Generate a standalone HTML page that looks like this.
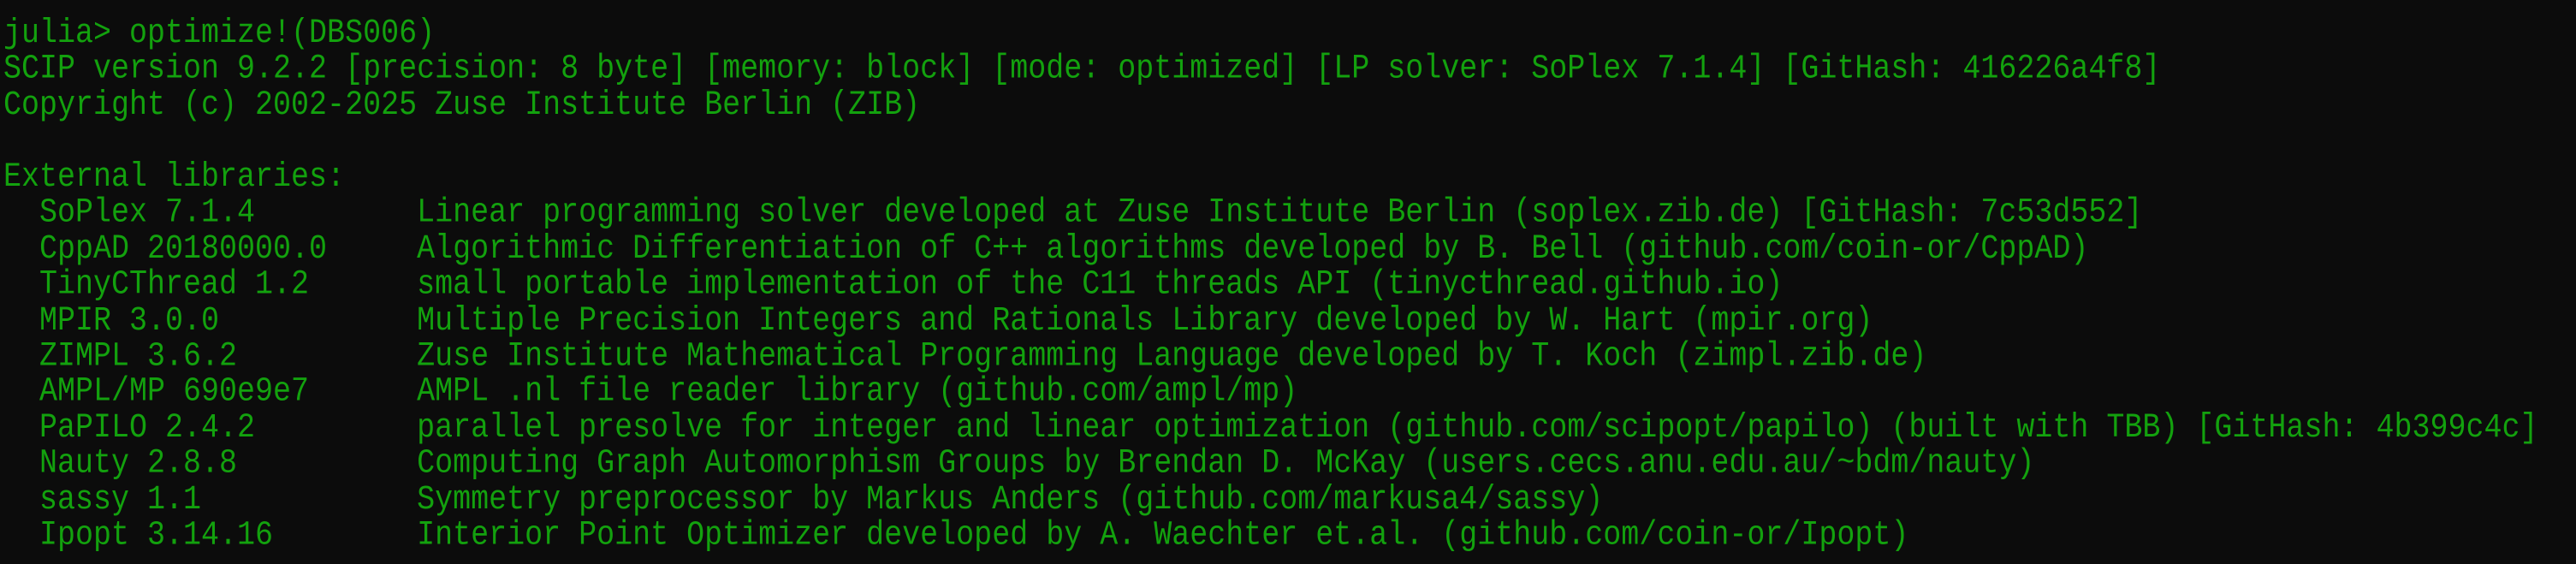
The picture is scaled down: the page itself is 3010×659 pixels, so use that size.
<!DOCTYPE html>
<html><head><meta charset="utf-8"><style>
html,body{margin:0;padding:0;background:#0c0c0c;width:3010px;height:659px;overflow:hidden}
pre{margin:0;position:absolute;left:4px;top:18px;font-family:"Liberation Mono",monospace;font-size:35px;line-height:36.43px;color:#13a10e;white-space:pre;transform:scaleY(1.15);transform-origin:0 0}
</style></head><body><pre>julia&gt; optimize!(DBS006)
SCIP version 9.2.2 [precision: 8 byte] [memory: block] [mode: optimized] [LP solver: SoPlex 7.1.4] [GitHash: 416226a4f8]
Copyright (c) 2002-2025 Zuse Institute Berlin (ZIB)

External libraries:
  SoPlex 7.1.4         Linear programming solver developed at Zuse Institute Berlin (soplex.zib.de) [GitHash: 7c53d552]
  CppAD 20180000.0     Algorithmic Differentiation of C++ algorithms developed by B. Bell (github.com/coin-or/CppAD)
  TinyCThread 1.2      small portable implementation of the C11 threads API (tinycthread.github.io)
  MPIR 3.0.0           Multiple Precision Integers and Rationals Library developed by W. Hart (mpir.org)
  ZIMPL 3.6.2          Zuse Institute Mathematical Programming Language developed by T. Koch (zimpl.zib.de)
  AMPL/MP 690e9e7      AMPL .nl file reader library (github.com/ampl/mp)
  PaPILO 2.4.2         parallel presolve for integer and linear optimization (github.com/scipopt/papilo) (built with TBB) [GitHash: 4b399c4c]
  Nauty 2.8.8          Computing Graph Automorphism Groups by Brendan D. McKay (users.cecs.anu.edu.au/~bdm/nauty)
  sassy 1.1            Symmetry preprocessor by Markus Anders (github.com/markusa4/sassy)
  Ipopt 3.14.16        Interior Point Optimizer developed by A. Waechter et.al. (github.com/coin-or/Ipopt)</pre></body></html>
